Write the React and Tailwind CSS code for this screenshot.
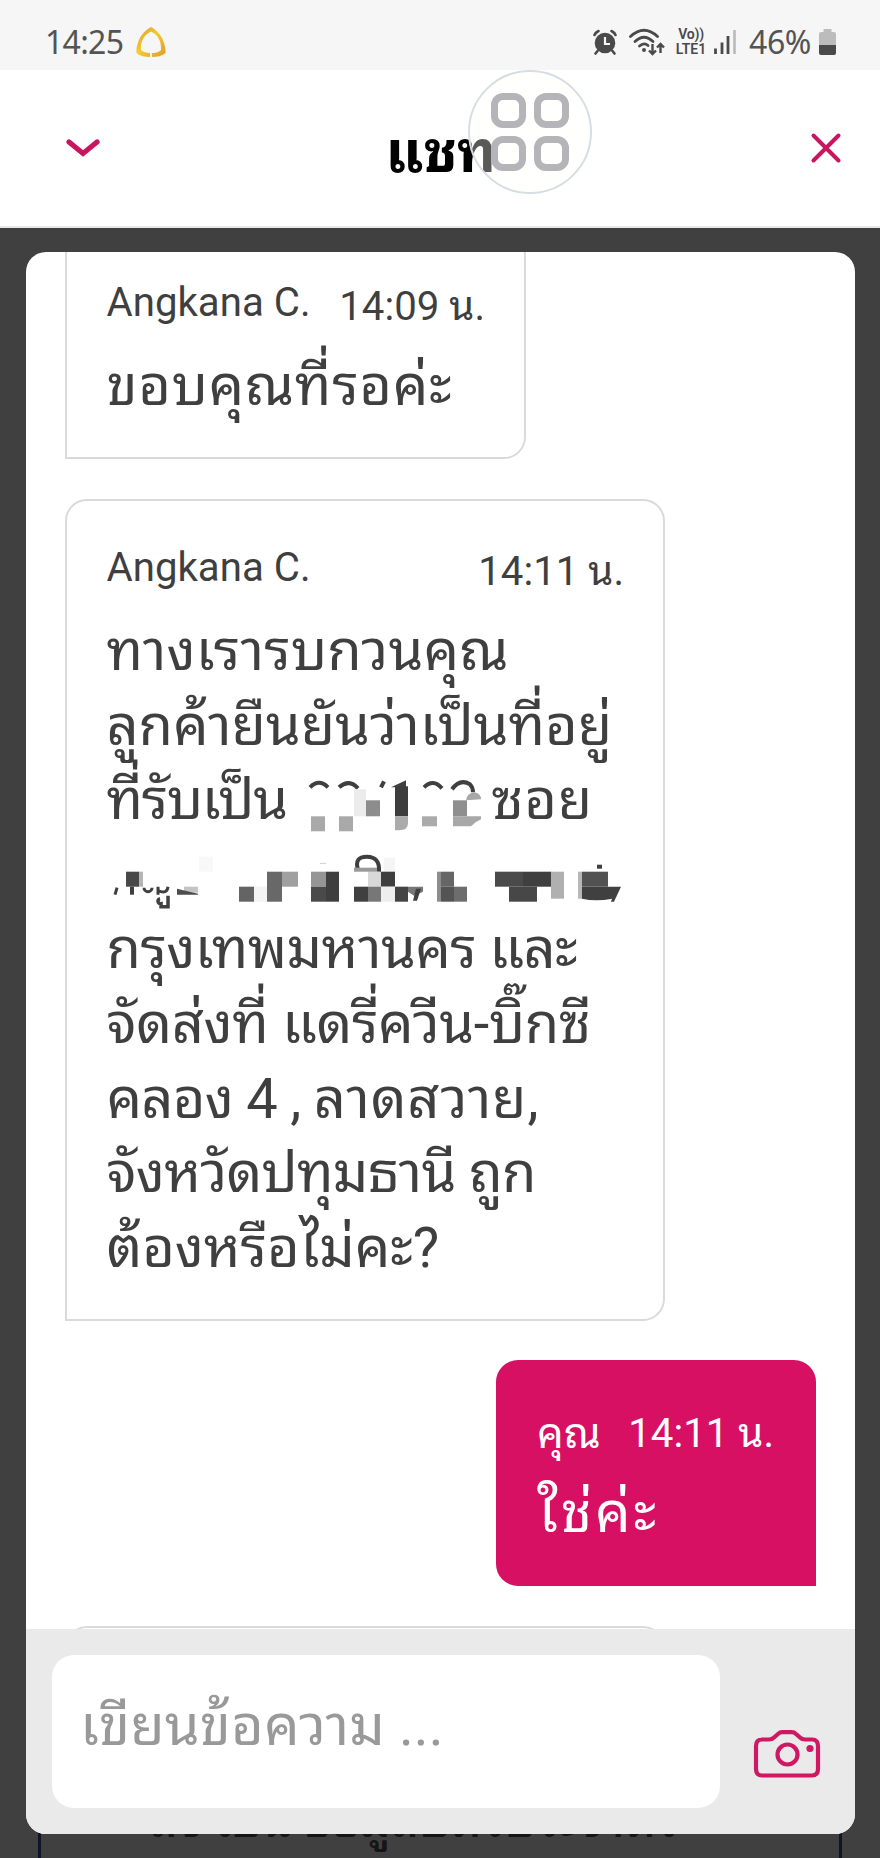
/* ================= MESSAGES ================= */
const messages = [
  {
    id: 1,
    from: "Angkana C.",
    time: "14:09 น.",
    width: "w-[461px]",
    lines: [{ text: "ขอบคุณที่รอค่ะ", tracking: "tracking-[0.7px]" }],
  },
  {
    id: 2,
    from: "Angkana C.",
    time: "14:11 น.",
    width: "w-[600px]",
    lines: [
      { text: "ทางเรารบกวนคุณ", tracking: "tracking-[0.2px]" },
      { text: "ลูกค้ายืนยันว่าเป็นที่อยู่", tracking: "tracking-[-0.05px]" },
      { hidden: "house" },
      { hidden: "street" },
      { text: "กรุงเทพมหานคร และ", tracking: "tracking-[-0.6px]" },
      { text: "จัดส่งที่ แดรี่ควีน-บิ๊กซี", tracking: "tracking-[-0.35px]" },
      {
        text: "คลอง 4 , ",
        tracking: "tracking-[-0.7px]",
        rest: "ลาดสวาย,",
      },
      { text: "จังหวัดปทุมธานี ถูก", tracking: "tracking-[-0.75px]" },
      { text: "ต้องหรือไม่คะ?", tracking: "tracking-[-0.1px]" },
    ],
  },
];

/* x, y, width, height, fill */
const houseCells = [
  [354, 788, 12, 27, "#ececec"],
  [366, 799, 14, 16, "#8c8c8c"],
  [311, 815, 14, 15, "#a9a9a9"],
  [339, 815, 14, 15, "#a9a9a9"],
  [395, 785, 13, 30, "#3d3d3d"],
  [422, 815, 15, 10, "#ababab"],
  [453, 799, 14, 16, "#8f8f8f"],
];

const streetCells = [
  [199, 855, 14, 15, "#f8f8f8"],
  [126, 870, 13, 15, "#484848"],
  [139, 870, 4, 15, "#b5b5b5"],
  [184, 885, 14, 6, "#c4c4c4"],
  [239, 885, 15, 15, "#646464"],
  [254, 885, 13, 15, "#f3f3f3"],
  [267, 870, 15, 30, "#686868"],
  [282, 870, 16, 15, "#a0a0a0"],
  [311, 870, 15, 15, "#959595"],
  [326, 870, 13, 30, "#3f3f3f"],
  [311, 885, 15, 15, "#4a4a4a"],
  [384, 856, 11, 14, "#f5f5f5"],
  [368, 870, 13, 15, "#d8d8d8"],
  [381, 870, 14, 15, "#3f3f3f"],
  [354, 885, 14, 15, "#404040"],
  [368, 885, 13, 15, "#777777"],
  [381, 885, 14, 15, "#eeeeee"],
  [395, 885, 13, 15, "#444444"],
  [437, 870, 4, 30, "#8d8d8d"],
  [441, 870, 13, 15, "#666666"],
  [441, 885, 13, 15, "#545454"],
  [454, 885, 13, 15, "#6d6d6d"],
  [495, 870, 28, 15, "#4a4a4a"],
  [523, 870, 28, 15, "#3f3f3f"],
  [509, 885, 28, 15, "#474747"],
  [551, 870, 13, 27, "#b0b0b0"],
  [578, 870, 4, 27, "#b8b8b8"],
  [582, 870, 26, 15, "#525252"],
];

const Cells = ({ cells }) =>
  cells.map(([x, y, w, h, fill]) => (
    <rect key={`${x}-${y}`} x={x} y={y} width={w} height={h} fill={fill} />
  ));

const HouseMosaic = () => (
  <svg
    viewBox="285 761.7 208 74.6"
    className="w-[208px] h-[74.6px] shrink-0"
    shapeRendering="geometricPrecision"
  >
    <g fill="none" stroke="#3f3f3f" strokeWidth="4">
      <path d="M310 786 Q319 777 328 786" />
      <path d="M339 786 Q349 777 358 787" />
      <path d="M384 780 L381 786" />
      <path d="M424 786 Q433 777 442 787" />
      <path d="M452 788 Q460 777 470 783 Q473 786 473 791" />
    </g>
    <Cells cells={houseCells} />
    <path d="M391 786 L406 779 V786 Z" fill="#3f3f3f" />
    <path d="M395 815 H408 V822 Q408 829 399 829 L395 829 Z" fill="#ababab" />
    <path d="M466 799 Q467 792 474 791 Q481 792 481 798 Z" fill="#a8a8a8" />
    <path d="M453 815 H481 V818 Q476 820 471 825 H453 Z" fill="#a8a8a8" />
  </svg>
);

const StreetMosaic = () => (
  <svg
    viewBox="107 836.3 520 74.6"
    className="w-[520px] h-[74.6px] block"
    shapeRendering="geometricPrecision"
  >
    <Cells cells={streetCells} />
    <g fill="none" stroke="#3f3f3f" strokeWidth="3">
      <path d="M117 886 L115 893" />
      <path d="M132 885 V893" strokeWidth="4" />
      <path d="M144 886 A4 4 0 1 0 152 886" />
      <path d="M158 885 V893 M158 889 Q167 893 168 885" />
      <path d="M160 897 A2.500 2.500 0 1 0 161 902 V905 H168 V894" strokeWidth="3.500" />
      <path d="M358 868 Q354 855 367 855 Q380 855 379 870" strokeWidth="4" />
      <path d="M320 862 Q323 861 326 862" stroke="#cfcfcf" strokeWidth="1" />
    </g>
    <path d="M177 887 L198 892 V893 H177 Z" fill="#4d4d4d" />
    <rect x="354" y="866" width="23" height="4" fill="#999999" />
    <path d="M408 885 H423 V890 L414 894 L408 890 Z" fill="#777777" />
    <path d="M416 887 H421 L417 899 H413 Z" fill="#3f3f3f" />
    <path d="M582 885 H621 L614 900 H611 L612 897 Q596 900 582 897 Z" fill="#404040" />
    <rect x="597" y="863" width="5" height="4" fill="#3f3f3f" />
  </svg>
);

/* ================= STATUS BAR ================= */
const StatusBar = () => (
  <div className="h-[70px] bg-[#f6f6f6] pl-[45px] pr-[44px] pt-3.5 flex items-center text-[#545454] font-['Noto_Sans',sans-serif]">
    <span className="w-[91px] text-[32px] leading-[42px] tracking-[-0.7px] whitespace-nowrap">
      14:25
    </span>
    <svg viewBox="0 0 30 32" className="w-[30px] h-8 shrink-0">
      <defs>
        <linearGradient id="leaf" x1="0" y1="0" x2="1" y2="1">
          <stop offset="0" stopColor="#d9952c" />
          <stop offset="0.450" stopColor="#f5cb2e" />
          <stop offset="1" stopColor="#dd9c2c" />
        </linearGradient>
      </defs>
      <path
        d="M15 1 C22 5 26 10 28 17 C29 20 30 24 29.500 27 C26 30 21 31 16 31 V27 C21 27 23 26 25 24 C25.500 15 22 9 15 5.500 C8 9 4.500 15 5 24 C7 26 10 27 14 27 V31 C9 31 4 30 .5 27 C0 23 1 20 2 17 C4 10 8 5 15 1 Z"
        fill="url(#leaf)"
      />
    </svg>

    <div className="ml-auto flex items-center">
      {/* alarm */}
      <svg viewBox="0 0 24 26" className="w-6 h-[26px]">
        <circle cx="12" cy="14" r="10.300" fill="#4a4a4a" />
        <path
          d="M1.500 6 Q2.500 3.500 5.500 2 M22.500 6 Q21.500 3.500 18.500 2 M4.500 22 L2.500 24.500 M19.500 22 L21.500 24.500"
          stroke="#4a4a4a"
          strokeWidth="2.600"
          strokeLinecap="round"
          fill="none"
        />
        <path d="M12 8 V15 H17" stroke="#f6f6f6" strokeWidth="2.200" fill="none" />
      </svg>
      {/* wifi */}
      <svg viewBox="0 0 36 28" className="ml-3 w-9 h-7">
        <g fill="none" stroke="#4a4a4a" strokeWidth="2.800" strokeLinecap="round">
          <path d="M1.500 8.500 Q15 -4 28.500 8.500" />
          <path d="M6 13.500 Q15 5 24 13.500" />
          <path d="M10.500 18 Q15 14 19 17.500" />
        </g>
        <circle cx="15" cy="22" r="2" fill="#4a4a4a" />
        <path
          d="M23.500 16 V26 M20 22.500 L23.500 26 L27 22.500 M31.500 25 V16 M28 19.500 L31.500 16 L35 19.500"
          stroke="#4a4a4a"
          strokeWidth="2.400"
          fill="none"
        />
      </svg>
      {/* volte */}
      <div className="ml-2.5 w-[32px] flex flex-col items-center text-[#4a4a4a] font-['Roboto',sans-serif] font-semibold">
        <span className="text-[14px] leading-[15px] tracking-[-0.2px]">Vo))</span>
        <span className="text-[14px] leading-[15px]">LTE1</span>
      </div>
      {/* signal */}
      <svg viewBox="0 0 22 24" className="ml-[7px] w-[22px] h-6">
        <path
          d="M1.500 24 V18.500 M8 24 V12.500 M14 24 V6"
          stroke="#4a4a4a"
          strokeWidth="2.800"
        />
        <path d="M20.500 24 V0" stroke="#b9b9b9" strokeWidth="2.600" />
      </svg>
      <span className="ml-[13px] w-[70px] text-[32px] leading-[42px] tracking-[-0.4px] whitespace-nowrap">
        46%
      </span>
      {/* battery */}
      <svg viewBox="0 0 17 26" className="w-[17px] h-[26px]">
        <path d="M4.500 0 H12.500 V3 H15 Q17 3 17 5 V16 H0 V5 Q0 3 2 3 H4.500 Z" fill="#bcbcbc" />
        <path d="M0 16 H17 V24 Q17 26 15 26 H2 Q0 26 0 24 Z" fill="#4a4a4a" />
      </svg>
    </div>
  </div>
);

/* ================= HEADER ================= */
const Header = () => (
  <header className="relative h-[158px] bg-white border-b-2 border-[#e8e8e8] pl-[66px] pr-[38px] flex justify-between">
    <button className="mt-[69px] self-start">
      <svg viewBox="0 0 34 20" className="w-[34px] h-5">
        <path
          d="M3 3 L17 14.500 L31 3"
          fill="none"
          stroke="#c9155f"
          strokeWidth="5.200"
          strokeLinecap="round"
        />
      </svg>
    </button>
    <h1 className="mt-[47px] ml-[5px] w-[144px] text-[57px] leading-[72px] font-bold text-black whitespace-nowrap">
      แชท
    </h1>
    <button className="mt-[62px] self-start">
      <svg viewBox="0 0 32 32" className="w-8 h-8">
        <path
          d="M3.500 3.500 L28.500 28.500 M28.500 3.500 L3.500 28.500"
          fill="none"
          stroke="#c9155f"
          strokeWidth="4"
          strokeLinecap="round"
        />
      </svg>
    </button>

    {/* floating assistive button */}
    <div className="absolute left-[468px] top-0 w-[124px] h-[124px] rounded-full border-2 border-[#d6dee2] bg-[#fffffb]/35 flex items-center justify-center">
      <div className="grid grid-cols-2 gap-2">
        {[0, 1, 2, 3].map((n) => (
          <span
            key={n}
            className="w-[35px] h-[35px] rounded-[12px] border-[7px] border-[#b5b4b8]"
          />
        ))}
      </div>
    </div>
  </header>
);

/* ================= MESSAGE ================= */
const MessageLine = ({ line }) => {
  if (line.hidden === "house") {
    return (
      <div className="flex h-[74.6px] whitespace-nowrap">
        <span className="w-[178px] shrink-0 tracking-[-1.3px]">ที่รับเป็น</span>
        <HouseMosaic />
        <span className="-ml-px tracking-[0.7px]">ซอย</span>
      </div>
    );
  }
  if (line.hidden === "street") return <StreetMosaic />;
  return (
    <p className={`${line.tracking} whitespace-pre`}>
      {line.text}
      {line.rest && <span className="tracking-[0.9px]">{line.rest}</span>}
    </p>
  );
};

const Message = ({ message }) => (
  <article
    className={`${message.width} rounded-[22px] rounded-bl-none border-2 border-[#dadada] bg-white pt-[39.5px] pl-[39.5px] pr-[39px] pb-[33.5px]`}
  >
    <div className="h-[74px] flex justify-between text-[40.2px] leading-[56px] whitespace-nowrap">
      <span>{message.from}</span>
      <time className="mt-1">{message.time}</time>
    </div>
    <div className="text-[56px] leading-[74.6px]">
      {message.lines.map((line, i) => (
        <MessageLine key={i} line={line} />
      ))}
    </div>
  </article>
);

const OwnMessage = () => (
  <article className="self-end w-[320px] h-[226px] rounded-[22px] rounded-br-none bg-[#d81064] text-white pt-[46px] pl-[41px] pr-[42px]">
    <div className="h-[69.5px] flex justify-between text-[40.2px] leading-[56px] whitespace-nowrap">
      <span className="text-[42px]">คุณ</span>
      <time>14:11 น.</time>
    </div>
    <p className="text-[56px] leading-[74.6px] tracking-[3px]">ใช่ค่ะ</p>
  </article>
);

/* ================= COMPOSER ================= */
const Composer = () => (
  <footer className="h-[205px] bg-[#eaeaea] pl-[26px] pt-[26px] flex">
    <div className="w-[668px] h-[153px] rounded-[22px] bg-white pl-[28px] pt-[33px] text-[56px] leading-[76px] tracking-[0.15px] text-[#999999] whitespace-nowrap">
      เขียนข้อความ ...
    </div>
    <svg viewBox="0 0 68 50" className="ml-[33px] mt-[73.5px] w-[68px] h-[50px]">
      <path
        d="M8 10.500 H16 Q19 10.500 21 8.500 L25 5 Q27 3.200 29 3.200 H39 Q41 3.200 43 5 L47 8.500 Q49 10.500 52 10.500 H59 Q65 10.500 65 17 V40 Q65 46.500 59 46.500 H9 Q3 46.500 3 40 V17 Q3 10.500 9 10.500 Z"
        fill="none"
        stroke="#cf1763"
        strokeWidth="4.200"
      />
      <circle cx="34.500" cy="25.500" r="10" fill="none" stroke="#cf1763" strokeWidth="4.200" />
      <circle cx="57" cy="19.500" r="3.600" fill="#cf1763" />
    </svg>
  </footer>
);

export default function App() {
  return (
    <div className="w-[880px] h-[1858px] flex flex-col overflow-hidden bg-[#404040] text-[#3f3f3f] font-['Roboto','Noto_Sans_Thai_Looped',sans-serif]">
      <StatusBar />
      <Header />

      <div className="h-[1630px] pt-6 overflow-hidden">
        <section className="relative z-10 ml-[26px] w-[829px] h-[1582px] rounded-[20px] overflow-hidden bg-white">
          <div className="h-[1377px] px-[39px] overflow-hidden flex flex-col">
            <div className="-mt-[18.5px] flex flex-col gap-[39.5px]">
              {messages.map((m) => (
                <Message key={m.id} message={m} />
              ))}
              <OwnMessage />
              <div className="w-[600px] h-20 rounded-t-[22px] border-2 border-[#dadada]" />
            </div>
          </div>
          <Composer />
        </section>

        {/* page behind the dialog */}
        <div className="-mt-[46px] mx-[38px] h-[80px] border-x-[3px] border-[#0e1528] text-center text-[48px] leading-[66px] font-medium text-[#151515] whitespace-nowrap">
          <p className="-ml-[52px]">ส่ง เป็น ข้อมูลบัตรประจำตัว</p>
        </div>
      </div>
    </div>
  );
}
